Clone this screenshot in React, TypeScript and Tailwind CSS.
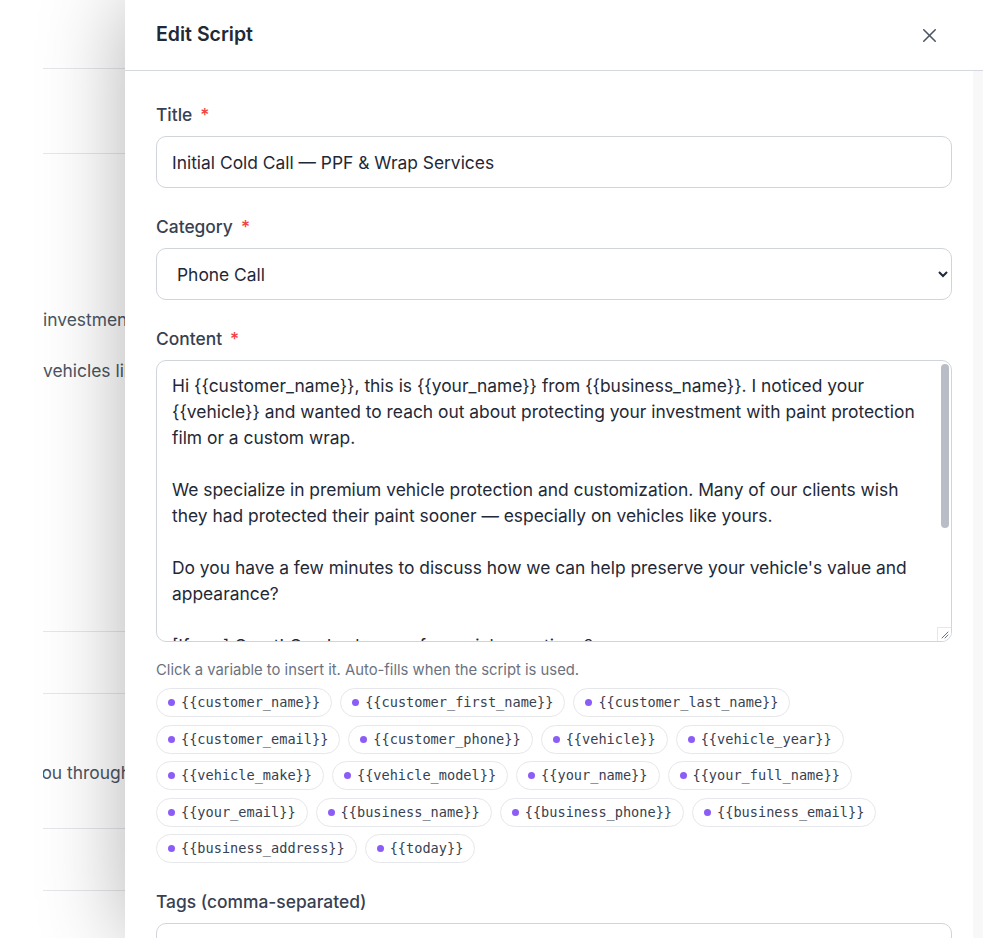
import React from "react";
import { X } from "lucide-react";

const VARS = [
  "customer_name",
  "customer_first_name",
  "customer_last_name",
  "customer_email",
  "customer_phone",
  "vehicle",
  "vehicle_year",
  "vehicle_make",
  "vehicle_model",
  "your_name",
  "your_full_name",
  "your_email",
  "business_name",
  "business_phone",
  "business_email",
  "business_address",
  "today",
];

const CONTENT = `Hi {{customer_name}}, this is {{your_name}} from {{business_name}}. I noticed your {{vehicle}} and wanted to reach out about protecting your investment with paint protection film or a custom wrap.

We specialize in premium vehicle protection and customization. Many of our clients wish they had protected their paint sooner — especially on vehicles like yours.

Do you have a few minutes to discuss how we can help preserve your vehicle's value and appearance?

[If yes] Great! Can I ask you a few quick questions?
- How long have you had your {{vehicle}}?
- Do you usually park it in a garage or outside?

[If no] No problem! When would be a better time to call you back?`;

function Label({ text, required }: { text: string; required?: boolean }) {
  return (
    <div className="mb-[9px] flex items-center pt-[1px] text-[17.4px] leading-6 font-medium text-[#374151]">
      <span>{text}</span>
      {required && <span className="ml-2 text-[#ef4444]">*</span>}
    </div>
  );
}

export default function App() {
  return (
    <div
      className="relative h-[938px] w-[983px] overflow-hidden bg-white"
      style={{ fontFamily: "Inter, 'Noto Sans', sans-serif" }}
    >
      {/* Background page */}
      <div className="ml-[43px] w-[100px] overflow-hidden text-[17.4px] text-[#4b5563]">
        <div className="h-[69px] border-b border-[#e5e7eb]" />
        <div className="h-[85px] border-b border-[#e5e7eb]" />
        <div className="h-[478px] border-b border-[#e5e7eb] pt-[154px]">
          <div className="whitespace-nowrap leading-6">investment</div>
          <div className="mt-[27px] whitespace-nowrap leading-6">vehicles like</div>
        </div>
        <div className="h-[62px] border-b border-[#e5e7eb]" />
        <div className="h-[135px] border-b border-[#e5e7eb] pt-[67px]">
          <div className="-ml-[11px] whitespace-nowrap leading-6">you through</div>
        </div>
        <div className="h-[62px] border-b border-[#e5e7eb]" />
      </div>

      {/* Drawer */}
      <div className="absolute top-0 bottom-0 left-[125px] right-0 flex flex-col bg-white shadow-[0_0_80px_rgba(0,0,0,0.3)]">
        <div className="flex h-[71px] shrink-0 items-center justify-between border-b border-[#d5d8de] pl-[31px] pr-[42px]">
          <h2 className="text-[19.5px] font-semibold text-[#1f2937]">Edit Script</h2>
          <X className="h-[23px] w-[23px] text-[#4b5563]" strokeWidth={1.6} />
        </div>
        <div className="flex min-h-0 flex-1">
          <div className="flex-1 overflow-hidden pl-[31px] pr-[21px] pt-[31px]">
            <div className="flex flex-col gap-[26px]">
              <div>
                <Label text="Title" required />
                <input
                  readOnly
                  value="Initial Cold Call — PPF & Wrap Services"
                  className="block h-[52px] w-full rounded-[10px] border border-[#d1d5db] bg-white px-[15px] text-[17.4px] text-[#1f2937] outline-none"
                />
              </div>
              <div>
                <Label text="Category" required />
                <select
                  defaultValue="phone"
                  className="block h-[52px] w-full rounded-[10px] border border-[#d1d5db] bg-white px-[16px] text-[17.4px] text-[#1f2937] outline-none"
                >
                  <option value="phone">Phone Call</option>
                  <option value="email">Email</option>
                  <option value="sms">Text Message</option>
                </select>
              </div>
              <div>
                <Label text="Content" required />
                <div className="relative">
                  <textarea
                    readOnly
                    value={CONTENT}
                    className="block h-[282px] w-full resize-none overflow-y-hidden rounded-[10px] border border-[#d1d5db] bg-white pl-[15px] pr-[26px] py-[12px] text-[17.4px] leading-[26px] text-[#1f2937] outline-none"
                  />
                  {/* scrollbar thumb */}
                  <div className="absolute right-[3px] top-[4px] h-[164px] w-[8px] rounded-full bg-[#b9bec6]" />
                  {/* resize corner */}
                  <div className="absolute bottom-[1px] right-[1px] flex h-[14px] w-[14px] items-end justify-end rounded-br-[9px] border-l border-t border-[#e5e7eb] bg-white">
                    <svg width="12" height="12" viewBox="0 0 12 12" className="mb-[1px] mr-[1px]">
                      <path d="M10 4 L4 10 M10 7 L7 10" stroke="#6b7280" strokeWidth="1" strokeLinecap="round" />
                    </svg>
                  </div>
                </div>
                <p className="mt-[18px] text-[14.8px] leading-5 text-[#6b7280]">
                  Click a variable to insert it. Auto-fills when the script is used.
                </p>
                <div className="mt-[8px] flex flex-wrap gap-x-2 gap-y-[7.5px]">
                  {VARS.map((v) => (
                    <span
                      key={v}
                      className="flex h-[29px] items-center gap-[6px] rounded-full border border-[#e5e7eb] bg-white pl-[11px] pr-[11px] text-[13.6px] text-[#374151]"
                      style={{ fontFamily: "'DejaVu Sans Mono', monospace" }}
                    >
                      <span className="h-[7px] w-[7px] rounded-full bg-[#8b5cf6]" />
                      {`{{${v}}}`}
                    </span>
                  ))}
                </div>
              </div>
              <div>
                <Label text="Tags (comma-separated)" />
                <input
                  readOnly
                  value=""
                  className="block h-[52px] w-full rounded-[10px] border border-[#d1d5db] bg-white px-[15px] text-[17.4px] text-[#1f2937] outline-none"
                />
              </div>
            </div>
          </div>
          <div className="w-[10px] shrink-0 bg-[#f8f8f9]" />
        </div>
      </div>
    </div>
  );
}
